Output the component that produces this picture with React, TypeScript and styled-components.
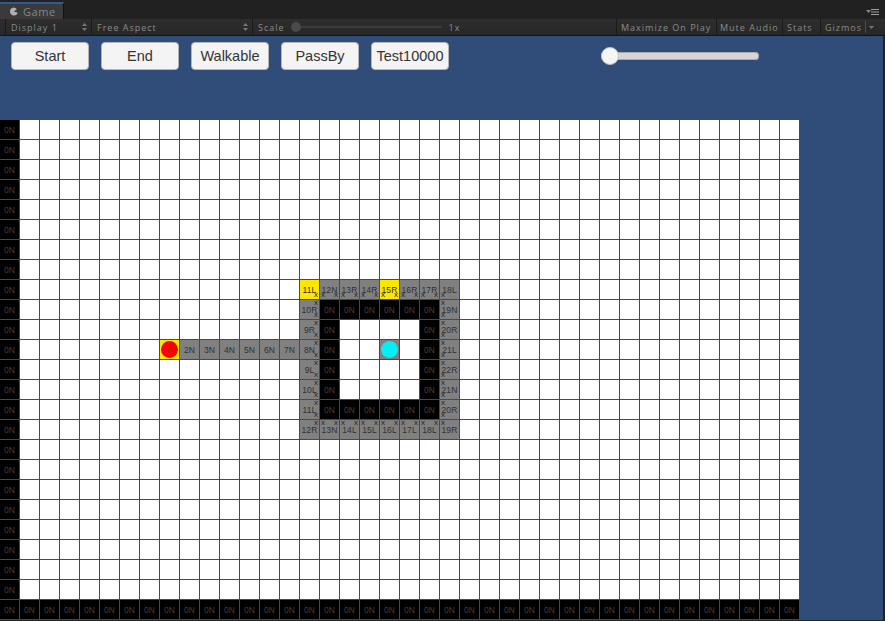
import React from "react";
import styled, { createGlobalStyle } from "styled-components";

const Global = createGlobalStyle`
  html, body { margin: 0; padding: 0; background: #222; }
  #root { width: 885px; height: 621px; overflow: hidden; }
`;

const Window = styled.div`
  width: 885px;
  height: 621px;
  display: flex;
  flex-direction: column;
  background: #232323;
  font-family: "Open Sans", "DejaVu Sans", sans-serif;
`;

const TabStrip = styled.div`
  height: 19px;
  flex: none;
  display: flex;
  justify-content: space-between;
  background: #212121;
  padding-right: 5px;
`;

const Tab = styled.div`
  width: 64px;
  height: 17px;
  margin-top: 2px;
  box-sizing: border-box;
  border-top: 2px solid #2f5a9a;
  border-right: 1px solid #111;
  background: #3a3a3a;
  color: #858585;
  font-size: 11px;
  letter-spacing: 0.6px;
  display: flex;
  align-items: center;
  gap: 5px;
  padding-left: 9px;
`;

const PaneMenu = styled.svg`
  width: 14px;
  height: 8px;
  margin-top: 8px;
`;

const Toolbar = styled.div`
  height: 17px;
  flex: none;
  display: flex;
  align-items: stretch;
  background: linear-gradient(#2e2e2e, #272727);
  border-bottom: 1px solid #141414;
  box-sizing: border-box;
  padding: 0 7px 0 5px;
  color: #8a8a8a;
  font-size: 9px;
  letter-spacing: 1px;
`;

const ToolItem = styled.div<{ $w: number; $pad?: number }>`
  width: ${(p) => p.$w}px;
  flex: none;
  box-sizing: border-box;
  border-left: 1px solid #1a1a1a;
  padding-left: ${(p) => p.$pad ?? 4}px;
  display: flex;
  align-items: center;
  justify-content: space-between;
  padding-right: 4px;
  white-space: nowrap;
`;

const ScaleItem = styled(ToolItem)`
  justify-content: flex-start;
`;

const Updown = styled.svg`
  width: 5px;
  height: 8px;
`;

const DropArrow = styled.span`
  display: flex;
  align-items: center;
  height: 12px;
  border-left: 1px solid #4c4c4c;
  padding-left: 3px;
`;

const ScaleKnob = styled.span`
  width: 10px;
  height: 10px;
  border-radius: 50%;
  background: #4a4a4a;
  flex: none;
  margin-left: 6px;
`;

const ScaleTrack = styled.span`
  width: 141px;
  height: 2px;
  background: #3b3b3b;
  flex: none;
  margin-right: 7px;
`;

const Spacer = styled.div`
  flex: 1;
`;

const GameView = styled.div`
  width: 883px;
  height: 584px;
  flex: none;
  background: #2f4d78;
  overflow: hidden;
`;

const Controls = styled.div`
  display: flex;
  align-items: center;
  gap: 12px;
  height: 28px;
  padding: 6px 0 0 11px;
`;

const GameButton = styled.button`
  width: 78px;
  height: 28px;
  box-sizing: border-box;
  padding: 0;
  border: 1px solid #b5b5b5;
  border-radius: 4px;
  background: #f4f4f4;
  color: #333;
  font-family: "Liberation Sans", Arial, sans-serif;
  font-size: 14.5px;
`;

const Slider = styled.div`
  position: relative;
  width: 158px;
  height: 8px;
  margin-left: 140px;
  box-sizing: border-box;
  background: #d6d6d6;
  border: 1px solid #a9a9a9;
  border-radius: 3px;
`;

const SliderKnob = styled.span`
  position: absolute;
  left: -1px;
  top: -6px;
  width: 18px;
  height: 18px;
  box-sizing: border-box;
  border-radius: 50%;
  background: #f5f5f5;
  border: 1px solid #c4c4c4;
`;

const Grid = styled.div`
  display: grid;
  grid-template-columns: repeat(40, 19px);
  grid-auto-rows: 19px;
  gap: 1px;
  width: 799px;
  margin-top: 50px;
`;

type Kind = "white" | "wall" | "path" | "mark";

const cellBg: Record<Kind, string> = {
  white: "#ffffff",
  wall: "#000000",
  path: "#808080",
  mark: "#ffe600",
};

const cellFg: Record<Kind, string> = {
  white: "#333",
  wall: "#404040",
  path: "#303030",
  mark: "#303030",
};

const Cell = styled.div<{ $kind: Kind }>`
  position: relative;
  box-sizing: border-box;
  padding-top: 1px;
  background: ${(p) => cellBg[p.$kind]};
  color: ${(p) => cellFg[p.$kind]};
  font-family: "Liberation Sans", Arial, sans-serif;
  font-size: 8.5px;
  line-height: 9px;
  letter-spacing: 0.1px;
  display: flex;
  align-items: center;
  justify-content: center;
`;

const Tick = styled.span<{ $at: string }>`
  position: absolute;
  font-size: 8px;
  line-height: 6px;
  color: #262626;
  ${(p) => (p.$at[0] === "T" ? "top: 0;" : "bottom: 1px;")}
  ${(p) => (p.$at[1] === "L" ? "left: 1px;" : "right: 1px;")}
`;

const Dot = styled.span<{ $color: string }>`
  width: 17px;
  height: 17px;
  margin-top: -1px;
  border-radius: 50%;
  background: ${(p) => p.$color};
`;

interface Spec {
  kind: Kind;
  text?: string;
  ticks?: string[];
  dot?: string;
}

const specs: Record<string, Spec> = {};
const put = (r: number, c: number, s: Spec) => {
  specs[`${r}-${c}`] = s;
};

for (let r = 0; r < 25; r++) put(r, 0, { kind: "wall", text: "0N" });
for (let c = 0; c < 40; c++) put(24, c, { kind: "wall", text: "0N" });

const p = (text: string, ticks: string[] = []): Spec => ({ kind: "path", text, ticks });
const BOTH_BOTTOM = ["BL", "BR"];
const RIGHT = ["TR", "BR"];
const LEFT = ["TL", "BL"];

put(8, 15, { kind: "mark", text: "11L", ticks: ["BR"] });
["12N", "13R", "14R"].forEach((t, i) => put(8, 16 + i, p(t, BOTH_BOTTOM)));
put(8, 19, { kind: "mark", text: "15R", ticks: BOTH_BOTTOM });
["16R", "17R"].forEach((t, i) => put(8, 20 + i, p(t, BOTH_BOTTOM)));
put(8, 22, p("18L", ["BL"]));

[["10R", "19N"], ["9R", "20R"], ["8N", "21L"], ["9L", "22R"], ["10L", "21N"], ["11L", "20R"]].forEach(([a, b], i) => {
  put(9 + i, 15, p(a, RIGHT));
  put(9 + i, 16, { kind: "wall", text: "0N" });
  put(9 + i, 21, { kind: "wall", text: "0N" });
  put(9 + i, 22, p(b, LEFT));
});
for (let c = 17; c <= 20; c++) {
  put(9, c, { kind: "wall", text: "0N" });
  put(14, c, { kind: "wall", text: "0N" });
}
put(11, 8, { kind: "mark", dot: "#f80000" });
["2N", "3N", "4N", "5N", "6N", "7N"].forEach((t, i) => put(11, 9 + i, p(t)));
put(11, 19, { kind: "path", dot: "#00f0f8" });
put(15, 15, p("12R", ["TR"]));
["13N", "14L", "15L", "16L", "17L", "18L"].forEach((t, i) => put(15, 16 + i, p(t, ["TL", "TR"])));
put(15, 22, p("19R", ["TL"]));

const cells = Array.from({ length: 1000 }, (_, i) => {
  const r = Math.floor(i / 40);
  const c = i % 40;
  return { key: i, spec: specs[`${r}-${c}`] ?? ({ kind: "white" } as Spec) };
});

export default function App() {
  return (
    <Window>
      <Global />
      <TabStrip>
        <Tab>
          <svg width="9" height="9" viewBox="0 0 9 9">
            <path d="M4.500 0.500a4 4 0 0 1 3.300 1.700L5 4.500l3.800 1.300a4 4 0 1 1-4.300-5.300z" fill="#b0b0b0" />
          </svg>
          Game
        </Tab>
        <PaneMenu viewBox="0 0 14 8">
          <path d="M0 2h5L2.500 5z" fill="#8a8a8a" />
          <path d="M5 1h8v1H5zM5 3.500h8v1H5zM5 6h8v1H5z" fill="#a0a0a0" />
        </PaneMenu>
      </TabStrip>
      <Toolbar>
        <ToolItem $w={86} $pad={5}>
          Display 1
          <Updown viewBox="0 0 5 8"><path d="M0 3l2.500-3L5 3zM0 5l2.500 3L5 5z" fill="#777" /></Updown>
        </ToolItem>
        <ToolItem $w={161} $pad={5}>
          Free Aspect
          <Updown viewBox="0 0 5 8"><path d="M0 3l2.500-3L5 3zM0 5l2.500 3L5 5z" fill="#777" /></Updown>
        </ToolItem>
        <ScaleItem $w={215} $pad={5}>
          Scale
          <ScaleKnob />
          <ScaleTrack />
          1x
        </ScaleItem>
        <Spacer />
        <ToolItem $w={100}>Maximize On Play</ToolItem>
        <ToolItem $w={66} $pad={3}>Mute Audio</ToolItem>
        <ToolItem $w={38}>Stats</ToolItem>
        <ToolItem $w={58}>
          Gizmos
          <DropArrow>
            <Updown viewBox="0 0 5 8"><path d="M0 3h5L2.500 6z" fill="#777" /></Updown>
          </DropArrow>
        </ToolItem>
      </Toolbar>
      <GameView>
        <Controls>
          <GameButton>Start</GameButton>
          <GameButton>End</GameButton>
          <GameButton>Walkable</GameButton>
          <GameButton>PassBy</GameButton>
          <GameButton>Test10000</GameButton>
          <Slider><SliderKnob /></Slider>
        </Controls>
        <Grid>
          {cells.map(({ key, spec }) => (
            <Cell key={key} $kind={spec.kind}>
              {spec.dot && <Dot $color={spec.dot} />}
              {spec.text}
              {spec.ticks?.map((t) => <Tick key={t} $at={t}>x</Tick>)}
            </Cell>
          ))}
        </Grid>
      </GameView>
    </Window>
  );
}
